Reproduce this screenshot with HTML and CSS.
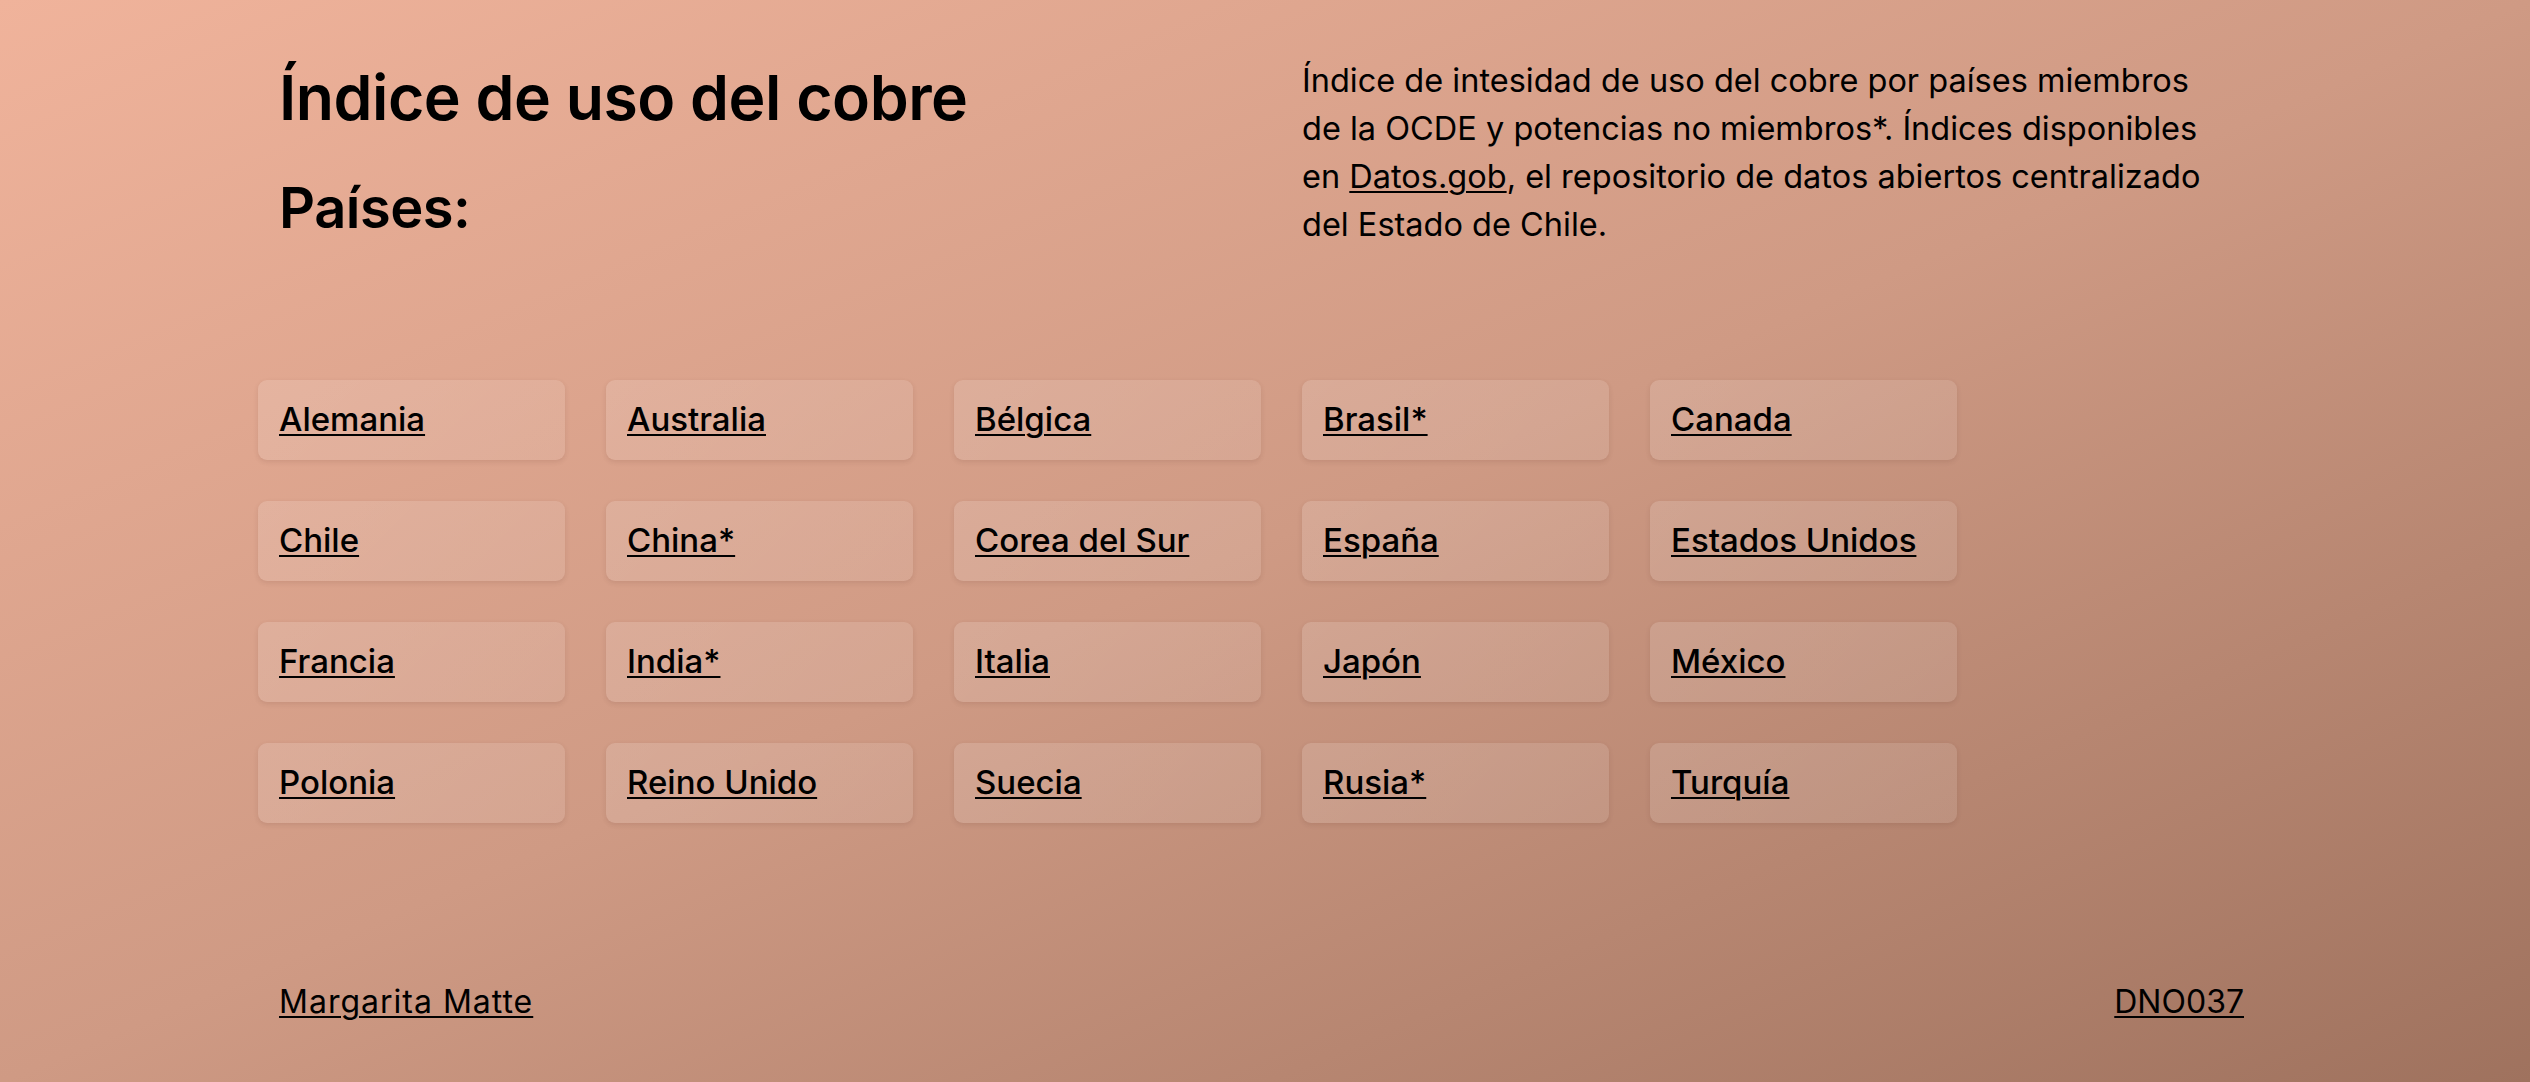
FILE: index.html
```html
<!DOCTYPE html>
<html lang="es">
<head>
<meta charset="utf-8">
<title>Índice de uso del cobre</title>
<link rel="stylesheet" href="styles.css">
</head>
<body>
<div class="page">
  <header class="header">
    <div class="titles">
      <h1 class="title">Índice de uso del cobre</h1>
      <h2 class="subtitle">Países:</h2>
    </div>
    <p class="intro">Índice de intesidad de uso del cobre por países miembros<br>de la OCDE y potencias no miembros*. Índices disponibles<br>en <a href="#">Datos.gob</a>, el repositorio de datos abiertos centralizado<br>del Estado de Chile.</p>
  </header>
  <main class="grid">
    <div class="card"><a href="#">Alemania</a></div>
    <div class="card"><a href="#">Australia</a></div>
    <div class="card"><a href="#">Bélgica</a></div>
    <div class="card"><a href="#">Brasil*</a></div>
    <div class="card"><a href="#">Canada</a></div>
    <div class="card"><a href="#">Chile</a></div>
    <div class="card"><a href="#">China*</a></div>
    <div class="card"><a href="#">Corea del Sur</a></div>
    <div class="card"><a href="#">España</a></div>
    <div class="card"><a href="#">Estados Unidos</a></div>
    <div class="card"><a href="#">Francia</a></div>
    <div class="card"><a href="#">India*</a></div>
    <div class="card"><a href="#">Italia</a></div>
    <div class="card"><a href="#">Japón</a></div>
    <div class="card"><a href="#">México</a></div>
    <div class="card"><a href="#">Polonia</a></div>
    <div class="card"><a href="#">Reino Unido</a></div>
    <div class="card"><a href="#">Suecia</a></div>
    <div class="card"><a href="#">Rusia*</a></div>
    <div class="card"><a href="#">Turquía</a></div>
  </main>
  <footer class="footer">
    <a class="author" href="#">Margarita Matte</a>
    <a href="#">DNO037</a>
  </footer>
</div>
</body>
</html>
```

FILE: styles.css
```css
html, body {
  margin: 0;
  padding: 0;
}

body {
  min-height: 1082px;
  background: linear-gradient(to bottom right, #f0b39b 0%, #cf9a84 50%, #9f725e 100%);
  color: #000;
  font-family: Inter, "Noto Sans", "Liberation Sans", sans-serif;
}

a {
  color: #000;
  text-decoration: underline;
  text-decoration-thickness: 2px;
  text-underline-offset: 3px;
}

.page {
  padding: 57px 286px 0 279px;
  height: 1082px;
  box-sizing: border-box;
}

.header {
  display: flex;
}

.titles {
  width: 1023px;
  flex: none;
  padding-top: 3px;
}

.title {
  margin: 0;
  font-size: 62.5px;
  line-height: 1.2;
  font-weight: 600;
  letter-spacing: -0.5px;
}

.subtitle {
  margin: 40px 0 0;
  font-size: 56px;
  line-height: 1.2;
  font-weight: 600;
  letter-spacing: -0.5px;
}

.intro {
  margin: 0;
  width: 960px;
  font-size: 32.5px;
  line-height: 48px;
  font-weight: 400;
}

.grid {
  display: grid;
  grid-template-columns: repeat(5, 307px);
  gap: 41px;
  margin: 131px 0 0 -21px;
}

.card {
  height: 80px;
  box-sizing: border-box;
  display: flex;
  align-items: center;
  padding: 0 21px;
  border-radius: 9px;
  background: linear-gradient(135deg, rgba(255,255,255,0.14), rgba(255,255,255,0.10));
  box-shadow: 0 2px 5px rgba(80, 40, 30, 0.12);
}

.card a {
  font-size: 33px;
  line-height: 1.2;
  font-weight: 500;
}

.footer {
  display: flex;
  justify-content: space-between;
  margin-top: 160px;
  font-size: 32px;
  line-height: 1.2;
}

.author {
  letter-spacing: 1px;
}
```
